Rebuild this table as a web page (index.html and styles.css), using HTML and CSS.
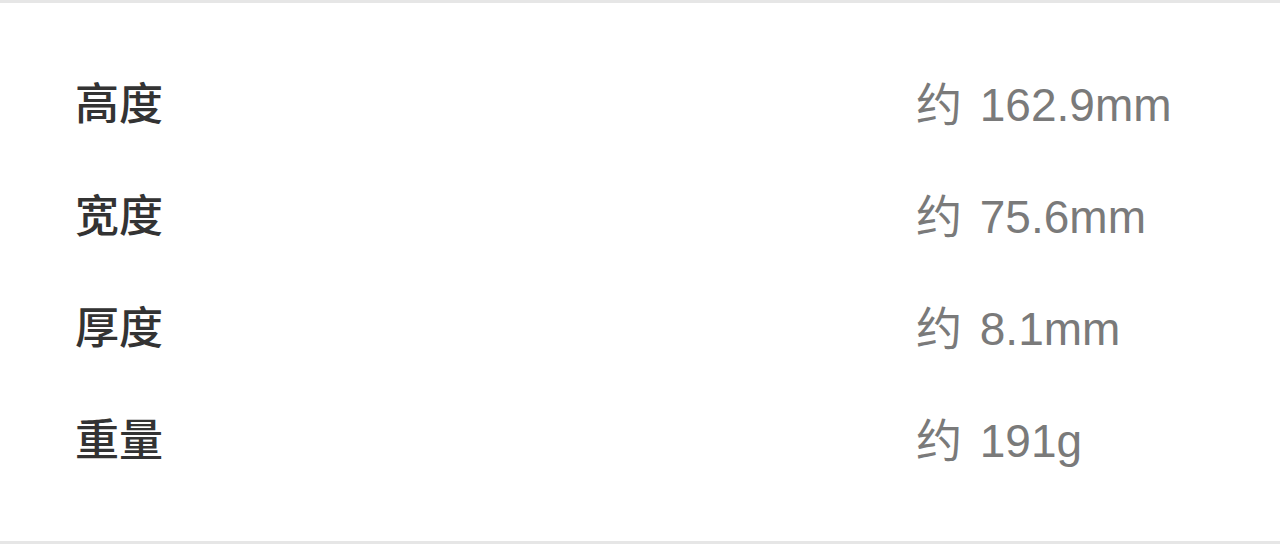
FILE: index.html
```html
<!DOCTYPE html>
<html lang="zh-CN">
<head>
<meta charset="utf-8">
<title>规格参数</title>
<link rel="stylesheet" href="styles.css">
</head>
<body>
<section class="spec">
  <div class="row"><span class="label">高度</span><span class="value">约 162.9mm</span></div>
  <div class="row"><span class="label">宽度</span><span class="value">约 75.6mm</span></div>
  <div class="row"><span class="label">厚度</span><span class="value">约 8.1mm</span></div>
  <div class="row"><span class="label">重量</span><span class="value">约 191g</span></div>
</section>
</body>
</html>
```
FILE: styles.css
```css
html, body {
  margin: 0;
  padding: 0;
  background: #ffffff;
}
.spec {
  border-top: 3px solid #e6e6e6;
  border-bottom: 3px solid #e6e6e6;
  padding: 42px 0 48px 0;
  font-family: "Liberation Sans", "Noto Sans CJK SC", sans-serif;
}
.row {
  display: grid;
  grid-template-columns: 1fr 364px;
  align-items: center;
  height: 112px;
  padding-left: 75px;
}
.label {
  font-family: "Noto Sans CJK SC", sans-serif;
  font-size: 44px;
  font-weight: 500;
  color: #333333;
}
.value {
  font-size: 46px;
  word-spacing: 5px;
  color: #7a7a7a;
}
```
